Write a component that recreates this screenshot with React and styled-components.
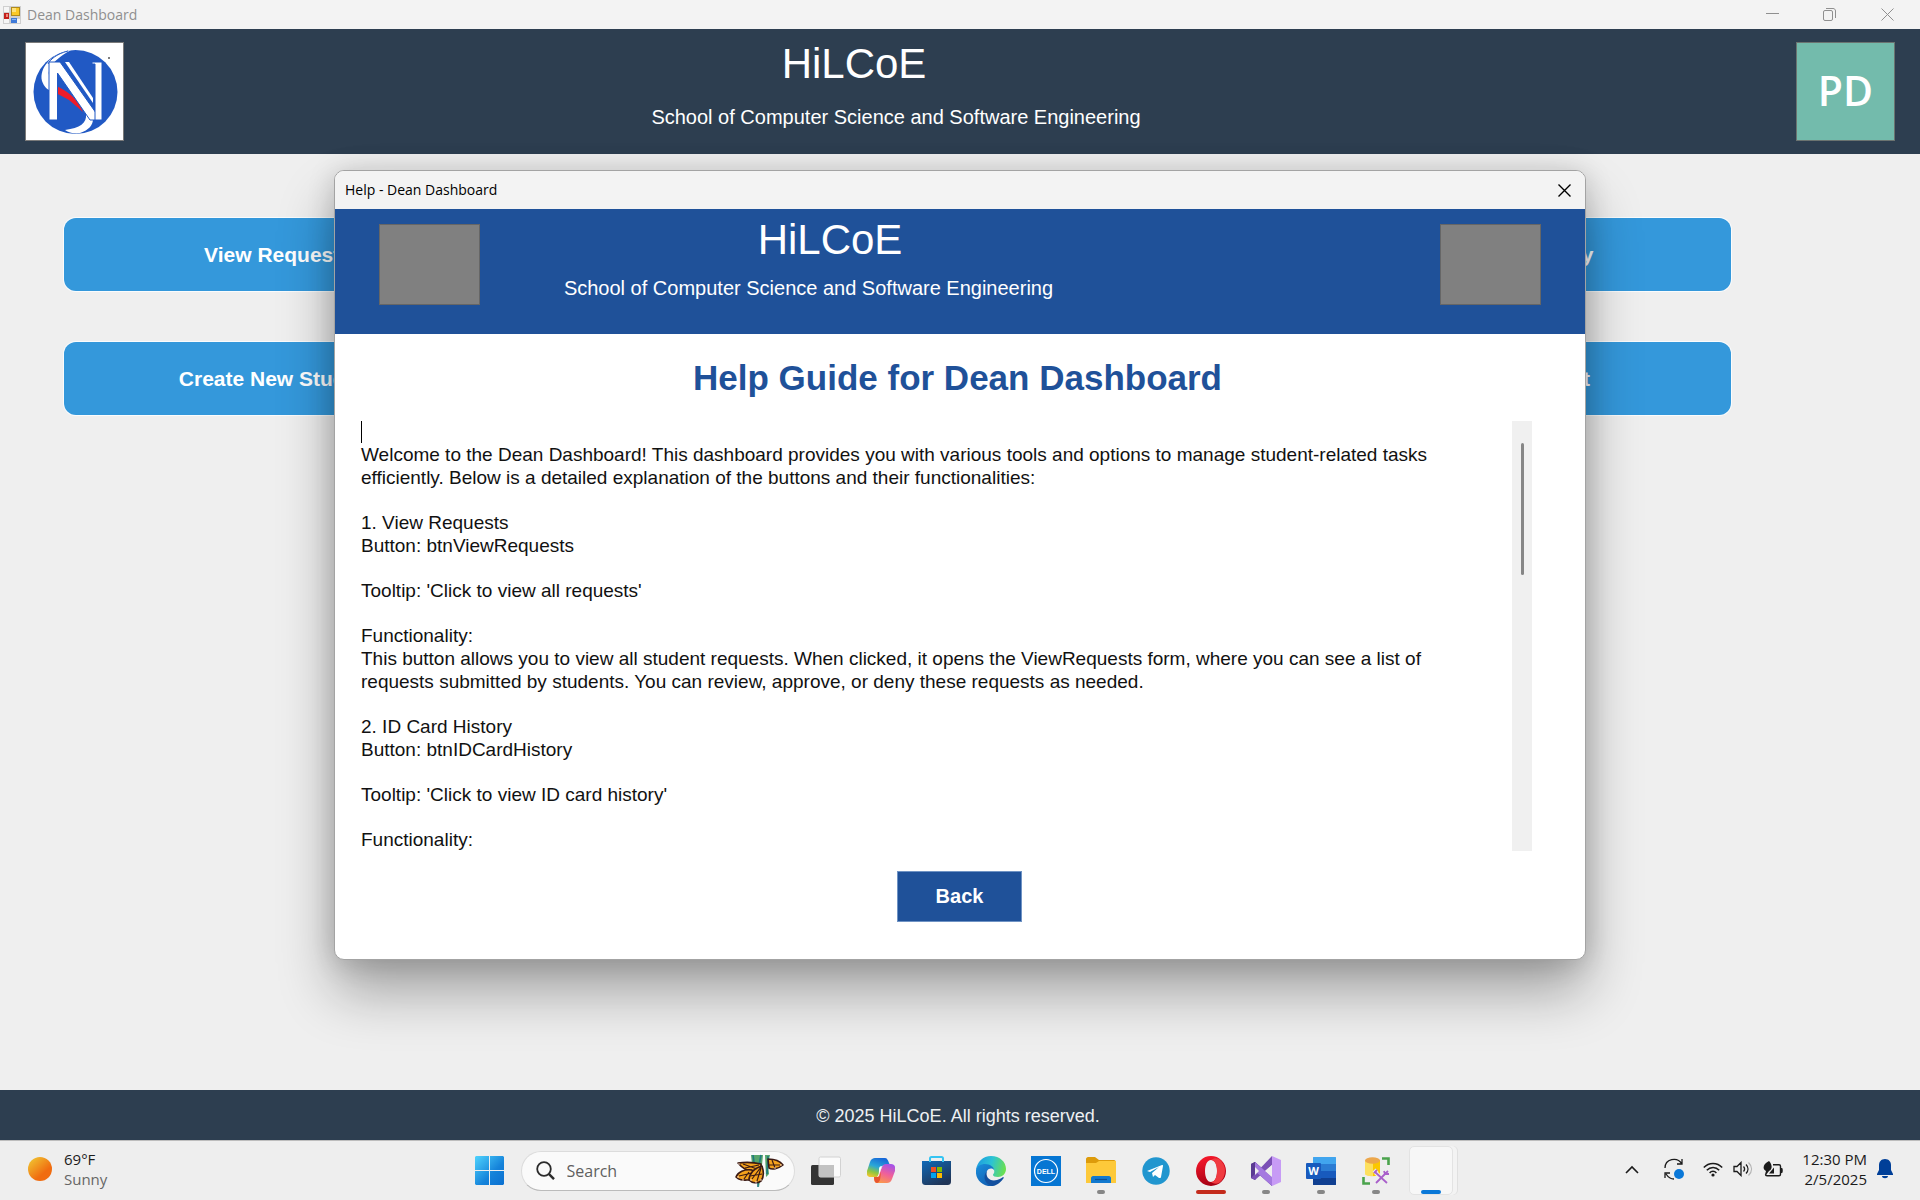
import React from "react";
import styled, { createGlobalStyle } from "styled-components";

const GlobalStyle = createGlobalStyle`
  *, *::before, *::after { box-sizing: border-box; }
  body {
    margin: 0;
    background: #efefef;
    font-family: "Liberation Sans", Arial, sans-serif;
  }
  h1, h2, p { margin: 0; font-weight: inherit; }
  button { padding: 0; border: 0; background: none; font-family: inherit; cursor: pointer; }
  svg { display: block; }
`;

const systemFont = `"Open Sans", "Noto Sans", sans-serif`;

/* ---------- window shell ---------- */

const Desktop = styled.div`
  position: relative;
  display: flex;
  flex-direction: column;
  min-height: 100vh;
  overflow: hidden;
`;

const TitleBar = styled.div`
  display: flex;
  align-items: center;
  gap: 6px;
  height: ${(p) => p.$height}px;
  padding-left: ${(p) => p.$inset}px;
  background: #f3f3f3;
  color: ${(p) => p.$color};
  font-family: ${systemFont};
  font-size: 14px;
  line-height: 20px;
`;

const WindowTitle = styled.span`
  flex: 1;
`;

const WindowControls = styled.div`
  display: flex;
  height: 100%;
`;

const WindowControl = styled.button`
  display: grid;
  place-items: center;
  width: ${(p) => p.$width}px;
  height: 100%;
  color: inherit;
`;

const Banner = styled.header`
  display: flex;
  align-items: flex-start;
  height: 125px;
  padding: 0 ${(p) => p.$side}px;
  background: ${(p) => p.$color};
  color: #fff;
`;

const BannerText = styled.div`
  flex: 1;
  display: flex;
  flex-direction: column;
  align-items: center;
  gap: ${(p) => p.$gap}px;
  padding-top: ${(p) => p.$top}px;
  padding-right: ${(p) => p.$right}px;
  white-space: nowrap;
`;

const SchoolName = styled.h1`
  padding-left: ${(p) => p.$left || 0}px;
  padding-right: ${(p) => p.$right || 0}px;
  font-size: 42px;
  line-height: 48px;
`;

const SchoolTagline = styled.p`
  font-size: 20px;
  line-height: 24px;
`;

const LogoBox = styled.div`
  width: 99px;
  height: 99px;
  margin-top: 13px;
  border: 1px solid #7a7a7a;
  background: #fff;
`;

const Avatar = styled.button`
  width: 99px;
  height: 99px;
  margin-top: 13px;
  padding-bottom: 3px;
  border: 1px solid #6b7370;
  background: #73bbac;
  color: #fff;
  font-family: ${systemFont};
  font-size: 41px;
  font-weight: 600;
`;

const Main = styled.main`
  flex: 1;
  display: grid;
  grid-template-columns: 428px 428px;
  grid-auto-rows: 73px;
  justify-content: space-between;
  align-content: start;
  row-gap: 51px;
  padding: 64px 189px 0 64px;
`;

const MenuButton = styled.button`
  border-radius: 12px;
  background: #3498db;
  box-shadow: 0 0 0 1px #fafcfd;
  color: #fff;
  font-size: 21px;
  font-weight: 700;
`;

const Footer = styled.footer`
  height: 50px;
  padding-right: 4px;
  background: #2d3e50;
  color: #eef1f3;
  font-size: 18px;
  line-height: 52px;
  text-align: center;
`;

/* ---------- help dialog ---------- */

const Overlay = styled.div`
  position: absolute;
  inset: 0;
  display: flex;
  align-items: flex-start;
  justify-content: center;
  padding-top: 170px;
`;

const Dialog = styled.section`
  width: 1252px;
  border: 1px solid #a3a3a3;
  border-radius: 10px;
  overflow: hidden;
  background: #fff;
  box-shadow: 0 32px 56px rgba(0, 0, 0, 0.32), 0 2px 28px rgba(0, 0, 0, 0.16);
`;

const Placeholder = styled.div`
  width: 101px;
  height: 81px;
  margin-top: 15px;
  border: 1px solid #666;
  background: #808080;
`;

const DialogBody = styled.div`
  display: flex;
  flex-direction: column;
  align-items: center;
  padding: 24px 53px 37px 26px;
`;

const HelpHeading = styled.h2`
  margin-bottom: 23px;
  padding-left: 22px;
  color: #1f5199;
  font-size: 35px;
  font-weight: 700;
  line-height: 40px;
`;

const HelpPane = styled.div`
  align-self: stretch;
  display: flex;
  min-height: 428px;
`;

const HelpText = styled.div`
  flex: 1;
  padding-right: 32px;
  color: #111;
  font-size: 19px;
  line-height: 23px;

  p + p { margin-top: 22px; }
`;

const Caret = styled.div`
  width: 1px;
  height: 22px;
  background: #000;
`;

const ScrollTrack = styled.div`
  display: flex;
  justify-content: center;
  width: 20px;
  padding-top: 22px;
  background: #f0f0f0;
`;

const ScrollThumb = styled.div`
  width: 3px;
  height: 132px;
  border-radius: 2px;
  background: #868686;
`;

const BackButton = styled.button`
  width: 125px;
  height: 51px;
  margin-top: 20px;
  margin-left: 26px;
  border: 1px solid #6f93c4;
  background: #1f5199;
  color: #fff;
  font-size: 20px;
  font-weight: 700;
`;

/* ---------- taskbar ---------- */

const Taskbar = styled.nav`
  display: grid;
  grid-template-columns: 1fr auto 1fr;
  height: 60px;
  border-top: 1px solid #bdbdbd;
  background: #eee;
  color: #1b1b1b;
  font-family: ${systemFont};
  font-size: 15px;
  line-height: 20px;
`;

const Weather = styled.div`
  display: flex;
  align-items: center;
  gap: 12px;
  padding: 0 0 4px 28px;
`;

const Muted = styled.div`
  color: #666;
`;

const TaskGroup = styled.div`
  display: flex;
  align-items: center;
`;

const TaskButton = styled.button`
  display: grid;
  place-items: center;
  position: relative;
  width: 55px;
  height: 59px;
`;

const RunMark = styled.span`
  position: absolute;
  left: 50%;
  bottom: 6px;
  width: ${(p) => p.$width}px;
  height: 4px;
  margin-left: -${(p) => p.$width / 2}px;
  border-radius: 2px;
  background: ${(p) => p.$color};
`;

const SearchBox = styled.label`
  display: flex;
  align-items: center;
  gap: 12px;
  width: 274px;
  height: 40px;
  margin: 0 4px;
  padding: 0 9px 0 14px;
  border: 1px solid #dcdcdc;
  border-bottom-color: #bbb;
  border-radius: 20px;
  background: #fafafa;
`;

const SearchInput = styled.input`
  flex: 1;
  min-width: 0;
  padding: 0;
  border: 0;
  outline: 0;
  background: none;
  font-family: inherit;
  font-size: 16px;

  &::placeholder { color: #5f5f5f; opacity: 1; }
`;

const ActiveTile = styled.span`
  width: 44px;
  height: 49px;
  border: 1px solid #e3e3e3;
  border-radius: 5px;
  background: #f7f7f7;
  box-shadow: 4px 0 0 #f3f3f3, 5px 0 0 #e0e0e0;
`;

const Tray = styled.div`
  display: flex;
  align-items: center;
  justify-content: flex-end;
  padding: 0 27px 3px 0;
`;

const TrayButton = styled.button`
  display: grid;
  place-items: center;
  width: ${(p) => p.$width || 30}px;
  height: 40px;
  color: #1b1b1b;
`;

const Clock = styled.div`
  width: 79px;
  margin-right: 10px;
  font-size: 15px;
  text-align: right;
  white-space: nowrap;
`;

/* ---------- drawings ---------- */

const FormIcon = () => (
  <svg width="18" height="18" viewBox="0 0 18 18" aria-hidden="true">
    <rect width="18" height="18" fill="#cfcfcf" />
    <rect x="1" y="1" width="5" height="5" fill="#f5f5f5" />
    <rect x="1" y="13" width="5" height="4" fill="#f5f5f5" />
    <rect x="14" y="13" width="3" height="4" fill="#f5f5f5" />
    <rect x="8.500" y="1.500" width="8" height="8" fill="#fbc926" stroke="#b08a1c" />
    <rect x="9" y="2" width="4" height="4" fill="#fde27c" />
    <rect x="1" y="7" width="5" height="6" fill="#c3201c" />
    <rect x="3" y="8" width="2" height="3" fill="#ee8a7c" />
    <rect x="8" y="12" width="6" height="5" fill="#3f7ad8" />
    <rect x="9" y="13" width="4" height="1" fill="#8db6f2" />
  </svg>
);

const CloseIcon = ({ width = 1 }) => (
  <svg width="13" height="13" viewBox="0 0 13 13" stroke="currentColor" strokeWidth={width} aria-hidden="true">
    <path d="M.5.5l12 12M12.500.5l-12 12" />
  </svg>
);

const SchoolLogo = () => (
  <svg width="97" height="97" viewBox="1 1 97 97" role="img" aria-label="HiLCoE logo">
    <circle cx="50.500" cy="50" r="42" fill="#2159c4" />
    <path d="M46 8C26 12 14 26 17 39c2 6 6 9 9 10l1-12C20 32 24 20 46 8z" fill="#fff" />
    <path d="M43 9C31 12 25 18 23 22" fill="none" stroke="#2159c4" strokeWidth="1" />
    <path d="M31 44c9 4 20 10 27 26L44 58l-13-7z" fill="#ed1c2a" />
    <path d="M61 72c1 9-6 14-21 16 4 3 10 4 15 3 9-3 13-8 13-14z" fill="#fff" />
    <g stroke="#2159c4" strokeWidth="1" fill="#fff">
      <path d="M24 20h11L76 78H65L32.500 31v47H24z" />
      <path d="M67 20h10v58h-7V22h-3z" />
    </g>
    <path d="M40 20l28 41v-5L44 20z" fill="#fff" />
    <circle cx="84" cy="16" r="1" fill="#555" />
  </svg>
);

const SunIcon = () => (
  <svg width="24" height="24" viewBox="0 0 24 24" aria-hidden="true">
    <defs>
      <linearGradient id="sun" x1="0.100" y1="0.100" x2="0.800" y2="0.900">
        <stop offset="0" stopColor="#f0c030" />
        <stop offset="0.750" stopColor="#f06c10" />
      </linearGradient>
    </defs>
    <circle cx="12" cy="12" r="12" fill="url(#sun)" />
  </svg>
);

const WindowsIcon = () => (
  <svg width="29" height="29" viewBox="0 0 29 29" aria-hidden="true">
    <defs>
      <linearGradient id="win" x1="0" y1="0" x2="1" y2="1">
        <stop offset="0" stopColor="#4fd3fd" />
        <stop offset="0.600" stopColor="#1583da" />
        <stop offset="1" stopColor="#0a6fd0" />
      </linearGradient>
    </defs>
    <path fill="url(#win)" d="M1 0h13v14H0V1zM15 0h13l1 1v13H15zM0 15h14v14H1l-1-1zM15 15h14v13l-1 1H15z" />
  </svg>
);

const SearchIcon = () => (
  <svg width="19" height="19" viewBox="0 0 19 19" fill="none" stroke="#2b2b2b" aria-hidden="true">
    <circle cx="8" cy="8" r="6.800" strokeWidth="1.800" />
    <path d="M12.800 12.800L18 18.200" strokeWidth="2.400" />
  </svg>
);

const ButterflyArt = () => (
  <svg width="50" height="34" viewBox="0 0 50 34" aria-hidden="true">
    <path d="M16 1h12l-2 20-2 12-2-6-4-8zM30 1h5l-2 9 1 10-3 3z" fill="#57a56a" />
    <path d="M18 1l2 14M26 1l-2 10M33 2l-1 18M23 28v5" stroke="#1f7a80" strokeWidth="1.600" fill="none" />
    <g fill="#f5a21c" stroke="#3b1a14" strokeWidth="1.600" strokeLinejoin="round">
      <path d="M3 9c7-1 15-1 23 1v6l-6 1C12 17 8 15 3 9z" />
      <path d="M1 23c2-5 8-8 16-7l3 6-5 4C9 26 5 27 1 23z" />
      <path d="M27 12c2 6 2 11-1 15-4 3-9 2-12-1 0-6 5-12 13-14z" />
      <path d="M33 5c6 0 12 2 15 6-5 4-11 5-14 3z" />
    </g>
    <path d="M8 10l14 5M10 14l14-3M4 22l13-3M9 25l5-7M26 13l-9 12M26 14l-4 13M15 22l12-2M37 6l3 8M34 11l11 0" stroke="#3b1a14" strokeWidth="1.200" fill="none" />
    <g fill="#f7dfcf">
      <circle cx="4" cy="10" r="0.800" /><circle cx="3" cy="23" r="0.800" /><circle cx="8" cy="26" r="0.800" />
      <circle cx="16" cy="26" r="0.800" /><circle cx="21" cy="28" r="0.800" /><circle cx="26" cy="26" r="0.800" />
      <circle cx="46" cy="11" r="0.800" /><circle cx="40" cy="14" r="0.800" />
    </g>
  </svg>
);

const TaskViewIcon = () => (
  <svg width="30" height="30" viewBox="0 0 30 30" aria-hidden="true">
    <rect x="0" y="9" width="23" height="20" rx="1.500" fill="#333" />
    <rect x="8" y="1" width="21.500" height="20" rx="1.500" fill="#fbfbfb" stroke="#d2d2d2" />
    <path d="M8 9h15v12H8z" fill="#c2c2c2" />
  </svg>
);

const CopilotIcon = () => (
  <svg width="28" height="26" viewBox="0 0 28 26" aria-hidden="true">
    <defs>
      <linearGradient id="cpA" x1="0.600" y1="0" x2="0.200" y2="1">
        <stop offset="0" stopColor="#1768d8" />
        <stop offset="0.450" stopColor="#2aa7d8" />
        <stop offset="0.750" stopColor="#8fc63f" />
        <stop offset="1" stopColor="#f2c52e" />
      </linearGradient>
      <linearGradient id="cpB" x1="0.700" y1="0" x2="0.300" y2="1">
        <stop offset="0" stopColor="#a552e8" />
        <stop offset="0.500" stopColor="#f0609a" />
        <stop offset="1" stopColor="#fb9a4a" />
      </linearGradient>
    </defs>
    <path d="M8 0h10c2 0 3 2 4 5l1 2h-5c-2 0-3 1-4 3l-2 7c-1 2-2 2-4 2H4c-4 0-5-3-4-6L3 4c1-3 3-4 5-4z" fill="url(#cpA)" />
    <path d="M20 25H10c-2 0-3-2-3-5v-1c3 0 4 0 5-2l3-8c1-2 2-3 4-3h5c4 0 5 4 4 7l-3 8c-1 3-3 4-5 4z" fill="url(#cpB)" />
    <path d="M7 19h3c2 0 3-1 3-3l1-2-1 8c-1 2-2 3-3 3-2 0-3-3-3-6z" fill="#e8552f" />
    <path d="M15 8l-3 9c0 1-1 2-2 2 2-2 2-5 2-8 0-2 1-3 3-3z" fill="#fff" />
  </svg>
);

const StoreIcon = () => (
  <svg width="29" height="30" viewBox="0 0 29 30" aria-hidden="true">
    <defs>
      <linearGradient id="store" x1="0" y1="0" x2="0.600" y2="1">
        <stop offset="0" stopColor="#0f69b8" />
        <stop offset="1" stopColor="#203557" />
      </linearGradient>
    </defs>
    <path d="M0 5h29v20c0 3-1 4-4 4H4c-3 0-4-1-4-4z" fill="url(#store)" />
    <path d="M8 6V2.500C8 1.500 8.500 1 9.500 1h10c1 0 1.500.5 1.500 1.500V6" fill="none" stroke="#35c4f2" strokeWidth="2" />
    <path d="M9 11h5v5H9z" fill="#f25022" />
    <path d="M15 11h5v5h-5z" fill="#7fba00" />
    <path d="M9 17h5v5H9z" fill="#00a4ef" />
    <path d="M15 17h5v5h-5z" fill="#ffb900" />
  </svg>
);

const EdgeIcon = () => (
  <svg width="30" height="30" viewBox="0 0 30 30" aria-hidden="true">
    <defs>
      <linearGradient id="edA" x1="0" y1="0.300" x2="1" y2="0.500">
        <stop offset="0" stopColor="#1d9be0" />
        <stop offset="0.500" stopColor="#2cc3d4" />
        <stop offset="1" stopColor="#6be04e" />
      </linearGradient>
      <linearGradient id="edB" x1="0" y1="0" x2="0.600" y2="1">
        <stop offset="0" stopColor="#1a8fdc" />
        <stop offset="1" stopColor="#1160b4" />
      </linearGradient>
    </defs>
    <path d="M0 14C1 6 7 0 15 0c9 0 15 6 15 13 0 5-4 8-8 8-3 0-5-1-5-2s2-2 1-5c-1-3-5-5-9-5-5 0-8 3-9 5z" fill="url(#edA)" />
    <path d="M0 14c1-4 5-6 9-6 5 0 9 3 9 6-2-2-5-2-7 1-3 5 0 11 8 14-2 1-3 1-4 1C6 30-1 23 0 14z" fill="url(#edB)" />
    <path d="M11 15c-2 6 3 11 10 9 3-1 5-2 6-3 1 0 1 1 0 2-3 4-7 7-11 7-7-2-10-9-5-15z" fill="#124f9e" />
  </svg>
);

const DellIcon = () => (
  <svg width="30" height="30" viewBox="0 0 30 30" aria-hidden="true">
    <rect width="30" height="30" fill="#0676d3" />
    <circle cx="15" cy="15" r="11.500" fill="none" stroke="#fff" strokeWidth="1.200" />
    <text x="15" y="18" fill="#fff" fontFamily="Liberation Sans, sans-serif" fontSize="7" fontWeight="700" textAnchor="middle">DELL</text>
  </svg>
);

const FolderIcon = () => (
  <svg width="30" height="27" viewBox="0 0 30 27" aria-hidden="true">
    <path d="M0 2c0-1 1-2 2-2h7l4 3h15c1 0 2 1 2 2v4H0z" fill="#dd9b0b" />
    <path d="M0 6h10l3-2h17v21c0 1 0 1-1 1H1c-1 0-1 0-1-1z" fill="#fdc93a" />
    <path d="M5 26v-5c0-1 1-2 2-2h16c1 0 2 1 2 2v5z" fill="#1279cf" />
    <path d="M9 22.500h12" stroke="#0b4f95" strokeWidth="1.200" />
  </svg>
);

const TelegramIcon = () => (
  <svg width="28" height="28" viewBox="0 0 28 28" aria-hidden="true">
    <circle cx="14" cy="14" r="13.700" fill="#2196cf" />
    <path d="M5 14l15-6c1 0 1 0 1 1l-2 11c0 1-1 1-2 1l-4-3-2 2-1-4 7-6-9 5z" fill="#fff" />
  </svg>
);

const OperaIcon = () => (
  <svg width="30" height="30" viewBox="0 0 30 30" aria-hidden="true">
    <defs>
      <linearGradient id="opera" x1="0" y1="0" x2="0.300" y2="1">
        <stop offset="0" stopColor="#ff1b2d" />
        <stop offset="1" stopColor="#a70014" />
      </linearGradient>
    </defs>
    <path d="M15 0a15 15 0 100 30 15 15 0 000-30zm0 4c4 0 6 5 6 11s-2 11-6 11-6-5-6-11 2-11 6-11z" fill="url(#opera)" fillRule="evenodd" />
    <path d="M15 4c3-2 5-2 8-1a15 15 0 010 24c-3 1-5 1-8-1 4 0 6-5 6-11S19 4 15 4z" fill="#f03a40" />
  </svg>
);

const VisualStudioIcon = () => (
  <svg width="30" height="30" viewBox="0 0 30 30" aria-hidden="true">
    <path d="M0 8l4-2 17 15v9L2 13v7l-2 2z" fill="#52308c" />
    <path d="M0 8l4-2 1 2v14l-1 2-4-2z" fill="#5b3a93" />
    <path d="M21 0v9L4 24l-4-2z" fill="#7a4fb5" />
    <path d="M4 6l17 15v9L4 15z" fill="#a579e0" />
    <path d="M21 0l9 4v22l-9 4z" fill="#c79bf5" />
    <path d="M21 9v12l-7-6z" fill="#eee" />
    <path d="M4 11v8l4-4z" fill="#eee" />
  </svg>
);

const WordIcon = () => (
  <svg width="30" height="28" viewBox="0 0 30 28" aria-hidden="true">
    <path d="M8 0h21c1 0 1 0 1 1v6H7V1c0-1 0-1 1-1z" fill="#41a5ee" />
    <path d="M7 7h23v7H7z" fill="#2b7cd3" />
    <path d="M7 14h23v7H7z" fill="#185abd" />
    <path d="M7 21h23v6c0 1 0 1-1 1H8c-1 0-1 0-1-1z" fill="#103f91" />
    <rect x="0" y="6" width="15" height="16" rx="1" fill="#185abd" />
    <text x="7.500" y="18" fill="#fff" fontFamily="Open Sans, sans-serif" fontSize="11" fontWeight="700" textAnchor="middle">W</text>
  </svg>
);

const DatabaseIcon = () => (
  <svg width="28" height="28" viewBox="0 0 28 28" aria-hidden="true">
    <path d="M3 3v14c0 3 15 3 15 0V3z" fill="#fde05e" />
    <path d="M11 3h7v14c0 1-3 2-7 2z" fill="#fbc700" />
    <ellipse cx="10.500" cy="3.500" rx="7.500" ry="3.200" fill="#eca74c" />
    <path d="M20 1.500h6.500V8M1.500 20v6.500H8" fill="none" stroke="#4aa34c" strokeWidth="2.600" />
    <path d="M13 15l12 11M26 14L14 26M12 16l3-3M22 14l1 3 4 0" fill="none" stroke="#eee" strokeWidth="4" />
    <path d="M13 15l12 11M26 14L14 26M12 16l3-3M22 14l1 3 4 0" fill="none" stroke="#a95fcb" strokeWidth="1.800" />
  </svg>
);

const ChevronIcon = () => (
  <svg width="14" height="9" viewBox="0 0 14 9" fill="none" stroke="currentColor" strokeWidth="1.600" aria-hidden="true">
    <path d="M1 8l6-6 6 6" />
  </svg>
);

const SyncIcon = () => (
  <svg width="22" height="22" viewBox="0 0 22 22" fill="none" stroke="currentColor" strokeWidth="1.300" aria-hidden="true">
    <path d="M2 10C2 1 14-2 19 6M19 1v5h-5M2 20v-5h5M3 16c2 3 5 5 8 5" />
    <circle cx="16" cy="16" r="5" fill="#0a78d8" stroke="none" />
  </svg>
);

const WifiIcon = () => (
  <svg width="20" height="15" viewBox="0 0 20 15" fill="none" stroke="currentColor" strokeWidth="1.500" aria-hidden="true">
    <path d="M.8 5.500c5-5.500 13.400-5.500 18.400 0M3.800 8.300c3.500-3.800 9-3.800 12.400 0M6.600 10.900c2-2.200 4.800-2.200 6.800 0" />
    <circle cx="10" cy="13" r="1.600" fill="currentColor" stroke="none" />
  </svg>
);

const SpeakerIcon = () => (
  <svg width="20" height="16" viewBox="0 0 20 16" fill="none" stroke="currentColor" strokeWidth="1.300" aria-hidden="true">
    <path d="M1 5.500h3L8 1.500v13l-4-4H1zM10.500 5.500c1.300 1.500 1.300 3.500 0 5M13 3.500c2.600 2.700 2.600 6.300 0 9" />
    <path d="M15.500 1.500c4 4 4 9 0 13" stroke="#b5b5b5" />
  </svg>
);

const BatteryIcon = () => (
  <svg width="20" height="16" viewBox="0 0 20 16" aria-hidden="true">
    <path d="M10 3.700h6c1 0 1.500.5 1.500 1.500v8c0 1-.5 1.500-1.500 1.500H4c-1 0-1.500-.5-1.500-1.500" fill="none" stroke="currentColor" strokeWidth="1.400" />
    <path d="M18 7h1c1 0 1 5 0 5h-1z" fill="currentColor" />
    <path d="M6 12.500l5-6v6z" fill="currentColor" />
    <path d="M6 0c3 3 4 8 0 10l-3 4-1-.5L3 10C-1 8 0 3 6 0z" fill="currentColor" />
  </svg>
);

const BellIcon = () => (
  <svg width="16" height="20" viewBox="0 0 16 20" fill="#003f98" aria-hidden="true">
    <path d="M8 0c4 0 6 3 6 6v5l2 4v1H0v-1l2-4V6c0-3 2-6 6-6zM5 17h6c0 3-6 3-6 0z" />
  </svg>
);

/* ---------- content ---------- */

const menu = ["View Requests", "ID Card History", "Create New Student", "Reset Account"];

const helpParagraphs = [
  ["Welcome to the Dean Dashboard! This dashboard provides you with various tools and options to manage student-related tasks efficiently. Below is a detailed explanation of the buttons and their functionalities:"],
  ["1. View Requests", "Button: btnViewRequests"],
  ["Tooltip: 'Click to view all requests'"],
  ["Functionality:", "This button allows you to view all student requests. When clicked, it opens the ViewRequests form, where you can see a list of requests submitted by students. You can review, approve, or deny these requests as needed."],
  ["2. ID Card History", "Button: btnIDCardHistory"],
  ["Tooltip: 'Click to view ID card history'"],
  ["Functionality:"],
];

const idle = { width: 8, color: "#868686" };

const apps = [
  { name: "Task View", Icon: TaskViewIcon },
  { name: "Copilot", Icon: CopilotIcon },
  { name: "Microsoft Store", Icon: StoreIcon },
  { name: "Edge", Icon: EdgeIcon },
  { name: "Dell", Icon: DellIcon },
  { name: "File Explorer", Icon: FolderIcon, mark: idle },
  { name: "Telegram", Icon: TelegramIcon },
  { name: "Opera", Icon: OperaIcon, mark: { width: 30, color: "#c42b1c" } },
  { name: "Visual Studio", Icon: VisualStudioIcon, mark: idle },
  { name: "Word", Icon: WordIcon, mark: idle },
  { name: "SQL Server", Icon: DatabaseIcon, mark: idle },
  { name: "Dean Dashboard", Icon: ActiveTile, mark: { width: 20, color: "#0a78d8" } },
];

function HelpDialog() {
  return (
    <Overlay>
      <Dialog role="dialog" aria-label="Help - Dean Dashboard">
        <TitleBar $height={38} $inset={10} $color="#000">
          <WindowTitle>Help - Dean Dashboard</WindowTitle>
          <WindowControl $width={42} aria-label="Close help">
            <CloseIcon width={1.4} />
          </WindowControl>
        </TitleBar>
        <Banner $color="#1f5199" $side={44}>
          <Placeholder />
          <BannerText $top={7} $gap={12} $right={303}>
            <SchoolName $left={43}>HiLCoE</SchoolName>
            <SchoolTagline>School of Computer Science and Software Engineering</SchoolTagline>
          </BannerText>
          <Placeholder />
        </Banner>
        <DialogBody>
          <HelpHeading>Help Guide for Dean Dashboard</HelpHeading>
          <HelpPane>
            <HelpText tabIndex={0}>
              <Caret />
              {helpParagraphs.map((lines, i) => (
                <p key={i}>
                  {lines.map((line, j) => (
                    <React.Fragment key={j}>
                      {j > 0 && <br />}
                      {line}
                    </React.Fragment>
                  ))}
                </p>
              ))}
            </HelpText>
            <ScrollTrack>
              <ScrollThumb />
            </ScrollTrack>
          </HelpPane>
          <BackButton>Back</BackButton>
        </DialogBody>
      </Dialog>
    </Overlay>
  );
}

export default function App() {
  return (
    <Desktop>
      <GlobalStyle />
      <TitleBar $height={29} $inset={3} $color="#8f8f8f">
        <FormIcon />
        <WindowTitle>Dean Dashboard</WindowTitle>
        <WindowControls>
          <WindowControl $width={62} aria-label="Minimize">
            <svg width="13" height="13" viewBox="0 0 13 13" stroke="currentColor" aria-hidden="true">
              <path d="M0 5.500h13" />
            </svg>
          </WindowControl>
          <WindowControl $width={52} aria-label="Restore">
            <svg width="13" height="13" viewBox="0 0 13 13" fill="none" stroke="currentColor" aria-hidden="true">
              <rect x="0.500" y="2.500" width="9" height="10" rx="1.500" />
              <path d="M3 .5h7c1.500 0 2.500 1 2.500 2.500V10" />
            </svg>
          </WindowControl>
          <WindowControl $width={65} aria-label="Close">
            <CloseIcon />
          </WindowControl>
        </WindowControls>
      </TitleBar>
      <Banner $color="#2d3e50" $side={25}>
        <LogoBox>
          <SchoolLogo />
        </LogoBox>
        <BannerText $top={11} $gap={17} $right={128}>
          <SchoolName $right={84}>HiLCoE</SchoolName>
          <SchoolTagline>School of Computer Science and Software Engineering</SchoolTagline>
        </BannerText>
        <Avatar>PD</Avatar>
      </Banner>
      <Main>
        {menu.map((label) => (
          <MenuButton key={label}>{label}</MenuButton>
        ))}
      </Main>
      <Footer>© 2025 HiLCoE. All rights reserved.</Footer>
      <Taskbar>
        <Weather>
          <SunIcon />
          <div>
            <div>69°F</div>
            <Muted>Sunny</Muted>
          </div>
        </Weather>
        <TaskGroup>
          <TaskButton aria-label="Start">
            <WindowsIcon />
          </TaskButton>
          <SearchBox>
            <SearchIcon />
            <SearchInput type="text" placeholder="Search" aria-label="Search" />
            <ButterflyArt />
          </SearchBox>
          {apps.map(({ name, Icon, mark }) => (
            <TaskButton key={name} aria-label={name}>
              <Icon />
              {mark && <RunMark $width={mark.width} $color={mark.color} />}
            </TaskButton>
          ))}
        </TaskGroup>
        <Tray>
          <TrayButton $width={36} aria-label="Hidden icons"><ChevronIcon /></TrayButton>
          <TrayButton $width={48} aria-label="Updates"><SyncIcon /></TrayButton>
          <TrayButton aria-label="Network"><WifiIcon /></TrayButton>
          <TrayButton aria-label="Volume"><SpeakerIcon /></TrayButton>
          <TrayButton aria-label="Battery"><BatteryIcon /></TrayButton>
          <Clock>
            <div>12:30 PM</div>
            <div>2/5/2025</div>
          </Clock>
          <BellIcon />
        </Tray>
      </Taskbar>
      <HelpDialog />
    </Desktop>
  );
}
